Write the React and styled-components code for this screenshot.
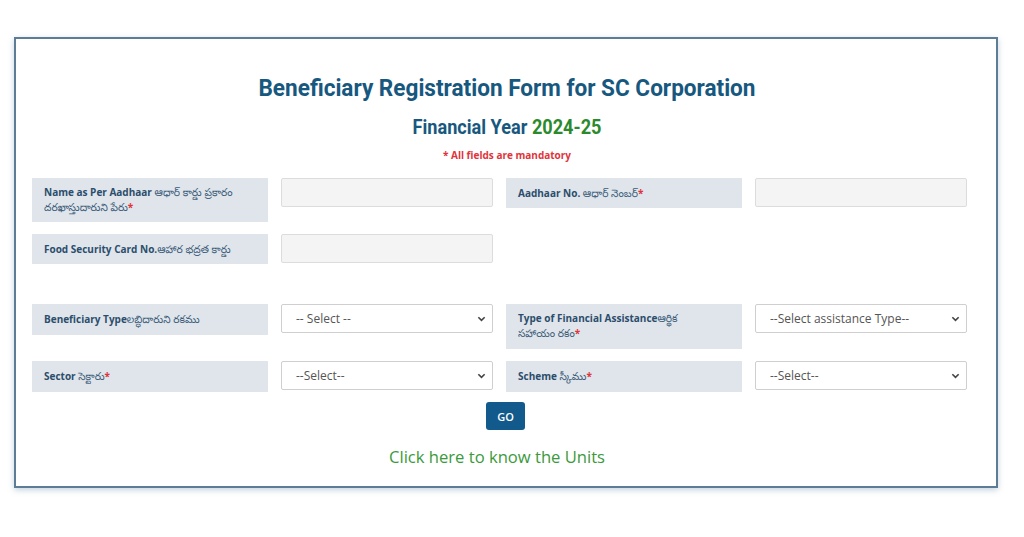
import React from "react";
import styled, { createGlobalStyle } from "styled-components";

const GlobalStyle = createGlobalStyle`
  html, body {
    margin: 0;
    padding: 0;
    background: #ffffff;
    font-family: "Open Sans", "Noto Sans", "Noto Sans Telugu", sans-serif;
  }
`;

const Page = styled.div`
  width: 1024px;
  height: 537px;
  padding: 37px 0 0 14px;
  box-sizing: border-box;
`;

const Card = styled.div`
  width: 984px;
  height: 451px;
  box-sizing: border-box;
  border: 2px solid #5d7d96;
  box-shadow: 0 2px 6px rgba(90, 125, 160, 0.35);
  background: #fff;
  padding: 34px 0 0 16px;
  display: flex;
  flex-direction: column;
`;

const Title = styled.h1`
  margin: 0;
  width: 950px;
  text-align: center;
  font-family: Roboto, "Liberation Sans", sans-serif;
  font-weight: 700;
  font-size: 24px;
  line-height: 30px;
  color: #17587f;
  transform: scaleX(0.94);
`;

const SubTitle = styled.h2`
  margin: 13px 0 0;
  width: 950px;
  text-align: center;
  font-family: Roboto, "Liberation Sans", sans-serif;
  font-weight: 700;
  font-size: 19.5px;
  line-height: 24px;
  color: #17587f;
  transform: scaleX(0.93);
`;

const Year = styled.span`
  color: #2b8a2b;
`;

const Mandatory = styled.div`
  margin-top: 8px;
  width: 950px;
  text-align: center;
  font-size: 10px;
  font-weight: 700;
  line-height: 14px;
  color: #e0343a;
`;

const Row = styled.div`
  display: grid;
  grid-template-columns: 236px 212px 236px 212px;
  column-gap: 13px;
  align-items: start;
  margin-top: ${p => p.$top || 12}px;
`;

const Label = styled.div`
  background: #dfe5eb;
  min-height: ${p => p.$h || 30}px;
  box-sizing: border-box;
  padding: ${p => (p.$multi ? "7px 12px" : "0 12px")};
  display: flex;
  align-items: ${p => (p.$multi ? "flex-start" : "center")};
  font-size: 10px;
  font-weight: 700;
  line-height: 15px;
  color: #2c4d6c;
`;

const Telugu = styled.span`
  font-weight: 400;
  font-size: 10.5px;
  color: #3a5a78;
`;

const Star = styled.span`
  color: #e0343a;
`;

const TextInput = styled.input`
  height: 29px;
  width: 100%;
  box-sizing: border-box;
  border: 1px solid #dcdcdc;
  border-radius: 2px;
  background: #f4f4f4;
  margin: 0;
`;

const SelectWrap = styled.div`
  position: relative;
  height: 29px;
  box-sizing: border-box;
  border: 1px solid #cfcfcf;
  border-radius: 2px;
  background: #fff;
  display: flex;
  align-items: center;
  padding-left: 14px;
  font-size: 12px;
  color: #555;
`;

const Chevron = styled.svg`
  position: absolute;
  right: 6px;
  top: 10px;
`;

const Actions = styled.div`
  width: 950px;
  margin-top: 10px;
  display: flex;
  flex-direction: column;
  align-items: center;
`;

const GoButton = styled.button`
  width: 39px;
  height: 28px;
  margin-right: 3px;
  border: none;
  border-radius: 3px;
  background: #125a8c;
  color: #fff;
  font-family: "Open Sans", sans-serif;
  font-size: 11px;
  font-weight: 600;
  padding: 0;
`;

const UnitsLink = styled.a`
  margin-top: 15px;
  margin-right: 20px;
  font-size: 16.6px;
  color: #3b9a3b;
  text-decoration: none;
`;

const Select = ({ text }) => (
  <SelectWrap>
    {text}
    <Chevron width="9" height="8" viewBox="0 0 10 8">
      <path d="M1.5 2 L5 5.5 L8.5 2" fill="none" stroke="#444" strokeWidth="1.8" />
    </Chevron>
  </SelectWrap>
);

export default function App() {
  return (
    <>
      <GlobalStyle />
      <Page>
        <Card>
          <Title>Beneficiary Registration Form for SC Corporation</Title>
          <SubTitle>
            Financial Year <Year>2024-25</Year>
          </SubTitle>
          <Mandatory>* All fields are mandatory</Mandatory>

          <Row $top={16}>
            <Label $multi $h={44}>
              <div>
                Name as Per Aadhaar <Telugu>ఆధార్ కార్డు ప్రకారం దరఖాస్తుదారుని పేరు</Telugu>
                <Star>*</Star>
              </div>
            </Label>
            <TextInput />
            <Label>
              <div>
                Aadhaar No. <Telugu>ఆధార్ నెంబర్</Telugu>
                <Star>*</Star>
              </div>
            </Label>
            <TextInput />
          </Row>

          <Row>
            <Label>
              <div>
                Food Security Card No.<Telugu>ఆహార భద్రత కార్డు</Telugu>
              </div>
            </Label>
            <TextInput />
          </Row>

          <Row $top={40}>
            <Label $h={31}>
              <div>
                Beneficiary Type<Telugu>లబ్ధిదారుని రకము</Telugu>
              </div>
            </Label>
            <Select text="-- Select --" />
            <Label $multi $h={45}>
              <div>
                Type of Financial Assistance<Telugu>ఆర్థిక<br />సహాయం రకం</Telugu>
                <Star>*</Star>
              </div>
            </Label>
            <Select text="--Select assistance Type--" />
          </Row>

          <Row>
            <Label $h={31}>
              <div>
                Sector <Telugu>సెక్టారు</Telugu>
                <Star>*</Star>
              </div>
            </Label>
            <Select text="--Select--" />
            <Label $h={31}>
              <div>
                Scheme <Telugu>స్కీము</Telugu>
                <Star>*</Star>
              </div>
            </Label>
            <Select text="--Select--" />
          </Row>

          <Actions>
            <GoButton>GO</GoButton>
            <UnitsLink href="#">Click here to know the Units</UnitsLink>
          </Actions>
        </Card>
      </Page>
    </>
  );
}
